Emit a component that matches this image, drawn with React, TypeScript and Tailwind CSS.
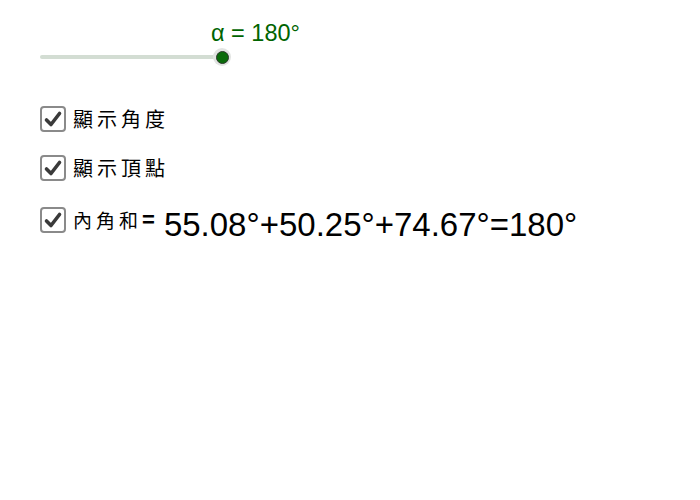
import React from "react";

function Check() {
  return (
    <div className="w-[26px] h-[26px] shrink-0 rounded-[4px] border-2 border-[#8a8a8a] bg-white flex items-center justify-center">
      <svg width="20" height="20" viewBox="0 0 20 20">
        <polyline
          points="3.5,11 8,15.5 16.5,4.5"
          fill="none"
          stroke="#3a3a3a"
          strokeWidth="3.6"
          strokeLinecap="round"
          strokeLinejoin="round"
        />
      </svg>
    </div>
  );
}

export default function App() {
  const cjk = { fontFamily: '"Noto Sans CJK TC", "Noto Sans CJK SC", sans-serif' };
  return (
    <div
      className="w-[700px] h-[500px] bg-white pl-[40px] pt-[20px] flex flex-col"
      style={{ fontFamily: '"Liberation Sans", Arial, sans-serif' }}
    >
      <div className="pl-[171px] h-[26px] text-[23.5px] leading-[26px] text-[#006400]">α = 180°</div>
      <div className="relative w-[190px] h-[22px] flex items-center">
        <div className="w-[182px] h-[4px] rounded-full bg-[#d3ddd3]" />
        <div className="absolute left-[173px] top-[2px] w-[18px] h-[18px] rounded-full bg-[#e2e4e2] flex items-center justify-center">
          <div className="w-[13px] h-[13px] rounded-full bg-[#0a6b0a] border border-[#2c3a2c]" />
        </div>
      </div>
      <div className="mt-[38px] flex items-center gap-[7px] h-[26px]">
        <Check />
        <span className="text-[20px] tracking-[4px] text-black" style={cjk}>顯示角度</span>
      </div>
      <div className="mt-[23px] flex items-center gap-[7px] h-[26px]">
        <Check />
        <span className="text-[20px] tracking-[4px] text-black" style={cjk}>顯示頂點</span>
      </div>
      <div className="mt-[26px] flex items-center h-[26px]">
        <Check />
        <span className="ml-[7px] text-[19px] tracking-[4px] text-black" style={cjk}>內角和</span>
        <span className="text-[22px] text-black font-bold leading-none">=</span>
        <span className="ml-[9px] text-[33px] leading-none text-black mt-[8px]">55.08°+50.25°+74.67°=180°</span>
      </div>
    </div>
  );
}
